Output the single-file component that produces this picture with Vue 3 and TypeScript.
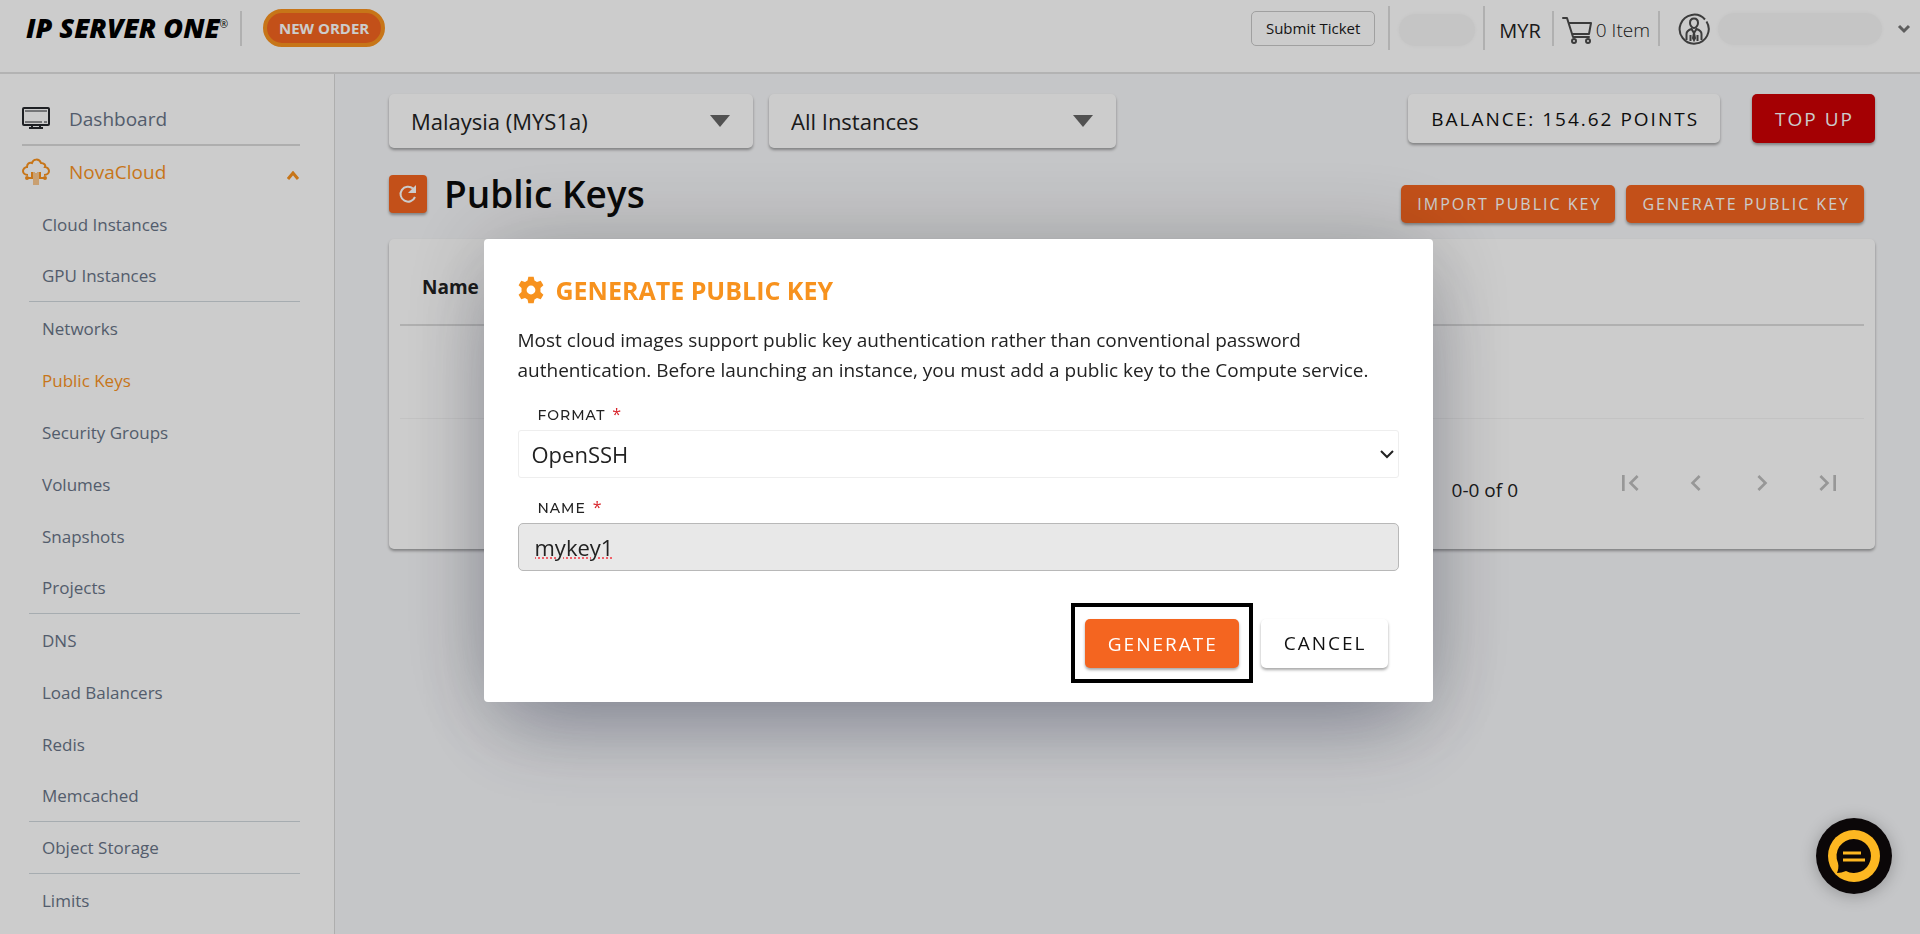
<script setup lang="ts">
import { ref } from 'vue'

interface NavItem {
  label: string
  active?: boolean
  divided?: boolean
}

const navItems: NavItem[] = [
  { label: 'Cloud Instances' },
  { label: 'GPU Instances', divided: true },
  { label: 'Networks' },
  { label: 'Public Keys', active: true },
  { label: 'Security Groups' },
  { label: 'Volumes' },
  { label: 'Snapshots' },
  { label: 'Projects', divided: true },
  { label: 'DNS' },
  { label: 'Load Balancers' },
  { label: 'Redis' },
  { label: 'Memcached', divided: true },
  { label: 'Object Storage', divided: true },
  { label: 'Limits' },
]

const pagerIcons = [
  { label: 'First page', path: 'M18.41 16.59 13.82 12l4.59-4.59L17 6l-6 6 6 6zM6 6h2v12H6z' },
  { label: 'Previous page', path: 'M15.41 7.41 14 6l-6 6 6 6 1.41-1.41L10.83 12z' },
  { label: 'Next page', path: 'M10 6 8.59 7.41 13.17 12l-4.58 4.59L10 18l6-6z' },
  { label: 'Last page', path: 'M5.59 7.41 10.18 12l-4.59 4.59L7 18l6-6-6-6zM16 6h2v12h-2z' },
]

const region = ref('Malaysia (MYS1a)')
const instance = ref('All Instances')
const format = ref('OpenSSH')
const keyName = ref('mykey1')
</script>

<template>
  <div class="page">
    <header class="topbar">
      <a class="logo" href="#" aria-label="IP ServerOne">IP SERVER ONE<sup>®</sup></a>
      <span class="sep"></span>
      <button class="new-order" type="button">NEW ORDER</button>
      <span class="grow"></span>
      <button class="ticket" type="button">Submit Ticket</button>
      <span class="sep tall"></span>
      <span class="blob short"></span>
      <span class="sep tall"></span>
      <span class="currency">MYR</span>
      <span class="sep"></span>
      <a class="cart" href="#">
        <svg width="32" height="28" viewBox="0 0 32 28" fill="none" stroke="#4a4a4a" stroke-width="2">
          <path d="M1 2h4l6 19h16" stroke-linejoin="round" stroke-linecap="round" />
          <path d="M7 7h22l-2 11H10" stroke-linejoin="round" />
          <circle cx="12" cy="25" r="2" /><circle cx="26" cy="25" r="2" />
        </svg>
        0 Item
      </a>
      <span class="sep"></span>
      <button class="account" type="button" aria-label="Account menu">
        <svg width="32" height="32" viewBox="0 0 32 32" fill="none" stroke="#4c4c4c" stroke-width="2">
          <path d="M27 6.500a14.500 14.500 0 1 0 1.500 2" />
          <path d="M16 5.500c-3 0-4 2-4 4.500s2 5 4 5 4-2.500 4-5-1-4.500-4-4.500z" />
          <path d="M8.500 27v-6c0-3 2-4 5-5l2.500 4 2.500-4c3 1 5 2 5 5v6M12.500 22v6M19.500 22v6" />
          <path d="m16 20-1 5 1 2 1-2z" />
        </svg>
        <span class="blob long"></span>
        <svg class="caret" width="14" height="10" viewBox="0 0 14 10" fill="none" stroke="#757575" stroke-width="3">
          <path d="m2 2 5 5 5-5" />
        </svg>
      </button>
    </header>

    <div class="body">
      <nav class="sidebar" aria-label="Main">
        <a class="top-link first" href="#">
          <svg width="28" height="28" viewBox="0 0 28 28" fill="none" stroke="#26282d" stroke-width="2">
            <rect x="1" y="3" width="26" height="17" rx="1" />
            <path d="M3 6h22M3 17h17M22 17h3" stroke-width="1" />
            <path d="M10 20v3M18 20v3M7 23h14" />
          </svg>
          <span>Dashboard</span>
        </a>
        <a class="top-link current" href="#">
          <svg width="28" height="28" viewBox="0 0 28 28" fill="none" stroke="#f9931f" stroke-width="2">
            <path d="M6 17c-3 0-5-2-5-4s2-4 4-4c0-3 2-5 5-4 1-4 7-5 9 0 3 0 5 2 4 4 2 0 4 2 4 4s-2 4-5 4" />
            <path d="M12 14v13M14 15v12M16 14v13" stroke-width="1" />
            <path d="M10 14v6H5M18 14v6h5" />
            <circle cx="5" cy="20" r="1" /><circle cx="23" cy="20" r="1" />
          </svg>
          <span>NovaCloud</span>
          <svg class="up" width="13" height="9" viewBox="0 0 13 9" fill="none" stroke="#f9931f" stroke-width="3">
            <path d="m1 8 5-6 5 6" />
          </svg>
        </a>
        <ul>
          <li v-for="item in navItems" :key="item.label" :class="{ divided: item.divided }">
            <a href="#" :class="{ active: item.active }">{{ item.label }}</a>
          </li>
        </ul>
      </nav>

      <main class="content">
        <div class="filters">
          <label class="picker region">
            <select v-model="region" aria-label="Region">
              <option>Malaysia (MYS1a)</option>
            </select>
            <svg width="20" height="12" viewBox="0 0 20 12"><path d="M0 0h20L10 12z" fill="#666" /></svg>
          </label>
          <label class="picker">
            <select v-model="instance" aria-label="Instances">
              <option>All Instances</option>
            </select>
            <svg width="20" height="12" viewBox="0 0 20 12"><path d="M0 0h20L10 12z" fill="#666" /></svg>
          </label>
          <span class="grow"></span>
          <button class="btn plain" type="button">BALANCE: 154.62 POINTS</button>
          <button class="btn red" type="button">TOP UP</button>
        </div>

        <div class="heading">
          <button class="refresh" type="button" aria-label="Refresh">
            <svg width="20" height="20" viewBox="0 0 20 20">
              <path d="M15 4.500A7.500 7.500 0 1 0 17 13" fill="none" stroke="#fff" stroke-width="2" />
              <path d="M18 1v8h-8z" fill="#fff" />
            </svg>
          </button>
          <h1>Public Keys</h1>
          <span class="grow"></span>
          <div class="actions">
            <button class="btn small" type="button">IMPORT PUBLIC KEY</button>
            <button class="btn small" type="button">GENERATE PUBLIC KEY</button>
          </div>
        </div>

        <section class="card">
          <table>
            <thead><tr><th scope="col">Name</th></tr></thead>
            <tbody><tr><td></td></tr></tbody>
          </table>
          <div class="pager">
            <span class="range">0-0 of 0</span>
            <button v-for="icon in pagerIcons" :key="icon.label" type="button" :aria-label="icon.label" disabled>
              <svg width="32" height="32" viewBox="0 0 24 24"><path :d="icon.path" fill="#bdbdbd" /></svg>
            </button>
          </div>
        </section>
      </main>
    </div>

    <div class="overlay">
      <form class="modal" role="dialog" aria-labelledby="dialog-title" @submit.prevent>
        <h2 id="dialog-title">
          <svg width="32" height="32" viewBox="0 0 24 24">
            <path fill="#f7921e" fill-rule="evenodd" d="M10 2h4l.6 2.900 1.900 1.100 2.800-1 2 3.500-2.200 2v3l2.200 2-2 3.500-2.800-1-1.900 1.100L14 22h-4l-.6-2.900-1.900-1.100-2.800 1-2-3.500 2.200-2v-3l-2.200-2 2-3.500 2.800 1 1.900-1.100zM12 8.700a3.300 3.300 0 1 0 0 6.600 3.300 3.300 0 0 0 0-6.600z" />
          </svg>
          GENERATE PUBLIC KEY
        </h2>
        <p>Most cloud images support public key authentication rather than conventional password authentication. Before launching an instance, you must add a public key to the Compute service.</p>
        <label class="field-label" for="key-format">FORMAT <b>*</b></label>
        <div class="select-box">
          <select id="key-format" v-model="format">
            <option>OpenSSH</option>
          </select>
          <svg width="14" height="10" viewBox="0 0 14 10" fill="none" stroke="#222" stroke-width="2">
            <path d="m1 2 6 6 6-6" />
          </svg>
        </div>
        <label class="field-label" for="key-name">NAME <b>*</b></label>
        <div class="input-box">
          <input id="key-name" v-model="keyName" type="text" />
        </div>
        <div class="modal-actions">
          <span class="focus-frame"><button class="btn orange" type="submit">GENERATE</button></span>
          <button class="btn plain" type="button">CANCEL</button>
        </div>
      </form>
    </div>

    <button class="chat" type="button" aria-label="Open chat">
      <svg width="76" height="76" viewBox="0 0 76 76">
        <circle cx="38" cy="38" r="38" fill="#0b0708" />
        <circle cx="38" cy="38" r="26" fill="#fdb721" />
        <path d="M38 21a17 17 0 1 1-8 32c-3 1-6 2-9 2 1-3 2-6 1-10a17 17 0 0 1 16-24z" fill="#0b0708" />
        <path d="M27 35h18M27 42h22" stroke="#fdb721" stroke-width="3" />
      </svg>
    </button>
  </div>
</template>

<style>
body {
  margin: 0;
}
</style>

<style scoped>
.page {
  display: flex;
  flex-direction: column;
  min-height: 100vh;
  font-family: "Open Sans", "Noto Sans", sans-serif;
  color: #222;
  background: #f7f8fa;
}

* {
  box-sizing: border-box;
}

button,
select,
input {
  font: inherit;
  color: inherit;
}

button {
  cursor: pointer;
}

a {
  color: inherit;
  text-decoration: none;
}

.grow {
  flex: 1;
}

.topbar {
  display: flex;
  align-items: center;
  height: 74px;
  padding: 0 9px 16px 26px;
  background: #fff;
  border-bottom: 2px solid #e0e0e0;
}

.logo {
  width: 214px;
  font-size: 27px;
  font-weight: 800;
  font-style: italic;
  line-height: 28px;
  color: #000;
  white-space: nowrap;
}

.logo sup {
  font-size: 10px;
  font-style: normal;
  font-weight: 400;
  line-height: 0;
  vertical-align: 10px;
}

.sep {
  width: 2px;
  height: 35px;
  background: #dcdcdc;
}

.sep.tall {
  height: 44px;
}

.new-order {
  height: 38px;
  margin-left: 21px;
  padding: 0 12px;
  color: #fff;
  font-size: 15px;
  font-weight: 700;
  background: #f46520;
  border: 4px solid #f9931f;
  border-radius: 19px;
}

.ticket {
  height: 35px;
  margin-right: 13px;
  padding: 0 14px;
  font-size: 15px;
  font-weight: 500;
  color: #1a1a1a;
  background: none;
  border: 1px solid #c8c8c8;
  border-radius: 5px;
}

.blob {
  height: 32px;
  background: #f7f7f7;
  border-radius: 16px;
  box-shadow: 0 0 4px #f7f7f7;
}

.blob.short {
  width: 76px;
  margin: 4px 8px 0 9px;
}

.blob.long {
  width: 164px;
}

.currency {
  margin: 4px 11px 0 14px;
  font-size: 20px;
}

.cart {
  display: flex;
  gap: 2px;
  align-items: center;
  margin: 4px 8px 0 8px;
  font-size: 19px;
  font-weight: 300;
}

.account {
  display: flex;
  gap: 8px;
  align-items: center;
  margin: 2px 0 0 18px;
  padding: 0;
  background: none;
  border: 0;
}

.caret {
  margin-left: 7px;
}

.body {
  display: flex;
  flex: 1;
}

.sidebar {
  flex: none;
  width: 335px;
  padding: 20px 34px 0 0;
  background: #fff;
  border-right: 1px solid #dadada;
  color: #687487;
}

.top-link {
  display: flex;
  gap: 19px;
  align-items: center;
  height: 52px;
  margin-left: 22px;
  font-size: 19px;
}

.top-link.first {
  border-bottom: 2px solid #dadada;
}

.current,
.active {
  color: #f9931f;
}

.up {
  margin: 7px 0 0 auto;
}

.sidebar ul {
  margin: 0 0 0 29px;
  padding: 0;
  font-size: 17px;
  list-style: none;
}

.sidebar li {
  display: flex;
  align-items: center;
  height: 52px;
  padding-left: 13px;
}

.sidebar li.divided {
  border-bottom: 1px solid #d0d8dc;
}

.content {
  flex: 1;
  min-width: 0;
  padding: 20px 45px 20px 54px;
}

.filters {
  display: flex;
  gap: 16px;
  align-items: flex-start;
}

.picker {
  display: flex;
  align-items: center;
  width: 347px;
  height: 54px;
  padding-right: 23px;
  background: #fff;
  border-radius: 5px;
  box-shadow: 0 2px 3px rgba(0, 0, 0, 0.35);
}

.picker.region {
  width: 364px;
}

.picker select {
  flex: 1;
  height: 54px;
  padding: 0 22px;
  font-size: 22px;
  background: none;
  border: 0;
  appearance: none;
}

.btn {
  height: 49px;
  padding: 0 21px 0 23px;
  font-size: 19px;
  font-weight: 500;
  letter-spacing: 2px;
  white-space: nowrap;
  border: 0;
  border-radius: 5px;
  box-shadow: 0 2px 3px rgba(0, 0, 0, 0.35);
}

.btn.plain {
  color: #111;
  background: #fff;
}

.btn.red {
  margin-left: 16px;
  color: #fff;
  background: #cd0004;
}

.btn.orange {
  color: #fff;
  background: #f46520;
}

.btn.small {
  height: 38px;
  padding: 0 14px 0 16px;
  color: #fff;
  font-size: 16px;
  font-weight: 400;
  background: #f46520;
}

.heading {
  display: flex;
  align-items: center;
  margin-top: 17px;
}

.refresh {
  display: grid;
  place-items: center;
  width: 38px;
  height: 38px;
  padding: 0;
  background: #f46520;
  border: 0;
  border-radius: 4px;
  box-shadow: 0 2px 3px rgba(0, 0, 0, 0.35);
}

h1 {
  margin: 0 0 0 17px;
  font-size: 37px;
  font-weight: 600;
  line-height: 50px;
  color: #0c0c0c;
}

.actions {
  display: flex;
  gap: 11px;
  margin: 20px 11px 0 0;
}

.card {
  height: 310px;
  margin-top: 16px;
  padding: 0 11px;
  background: #fff;
  border-radius: 5px;
  box-shadow: 0 2px 3px rgba(0, 0, 0, 0.35);
}

table {
  width: 100%;
  border-collapse: collapse;
}

th {
  height: 86px;
  padding: 11px 22px 0;
  font-size: 19px;
  text-align: left;
  border-bottom: 2px solid #dcdcdc;
}

td {
  height: 93px;
  border-bottom: 1px solid #f4f4f4;
}

.pager {
  display: flex;
  gap: 34px;
  align-items: center;
  justify-content: flex-end;
  padding: 44px 20px 0 0;
}

.range {
  margin: 14px 62px 0 0;
  font-size: 19px;
}

.pager button {
  display: grid;
  padding: 0;
  background: none;
  border: 0;
}

.overlay {
  position: fixed;
  inset: 0;
  display: grid;
  place-items: center;
  padding: 7px 4px 0 0;
  background: rgba(0, 0, 0, 0.2);
}

.modal {
  width: 949px;
  max-width: 90vw;
  padding: 34px 34px 19px;
  background: #fff;
  border-radius: 4px;
  box-shadow: 0 40px 80px -20px rgba(45, 52, 90, 0.35), 0 0 90px rgba(0, 0, 0, 0.2);
}

h2 {
  display: flex;
  gap: 9px;
  align-items: center;
  margin: 0 0 0 -3px;
  color: #f7921e;
  font-size: 25px;
  font-weight: 700;
  line-height: 34px;
}

.modal p {
  margin: 18px 0 14px;
  font-size: 19px;
  line-height: 30px;
}

.field-label {
  display: block;
  padding-left: 20px;
  font-family: Montserrat, "Open Sans", sans-serif;
  font-size: 14px;
  font-weight: 500;
  line-height: 30px;
  letter-spacing: 1px;
}

.field-label b {
  margin-left: 2px;
  color: #d8232a;
  font-family: "Open Sans", sans-serif;
  font-size: 16px;
  font-weight: 500;
}

.select-box {
  display: flex;
  align-items: center;
  height: 48px;
  margin-bottom: 14px;
  padding-right: 4px;
  border: 1px solid #eee;
  border-radius: 3px;
}

.select-box select {
  flex: 1;
  height: 46px;
  padding: 0 13px;
  font-size: 22px;
  background: none;
  border: 0;
  appearance: none;
}

.input-box {
  display: flex;
  align-items: center;
  height: 48px;
  background: #e8e8e8;
  border: 1px solid #b8b8b8;
  border-radius: 5px;
}

.input-box input {
  width: 100%;
  height: 46px;
  padding: 0 16px;
  font-size: 22px;
  background: none;
  border: 0;
  outline: 0;
  text-decoration: underline dotted #f0616a 2px;
}

.modal-actions {
  display: flex;
  gap: 8px;
  align-items: center;
  justify-content: flex-end;
  margin: 32px 11px 0 0;
}

.focus-frame {
  display: flex;
  padding: 12px 10px 11px;
  border: 4px solid #000;
}

.chat {
  position: fixed;
  right: 28px;
  bottom: 40px;
  display: grid;
  padding: 0;
  background: none;
  border: 0;
  border-radius: 50%;
  box-shadow: 0 2px 16px rgba(0, 0, 0, 0.25);
}
</style>
